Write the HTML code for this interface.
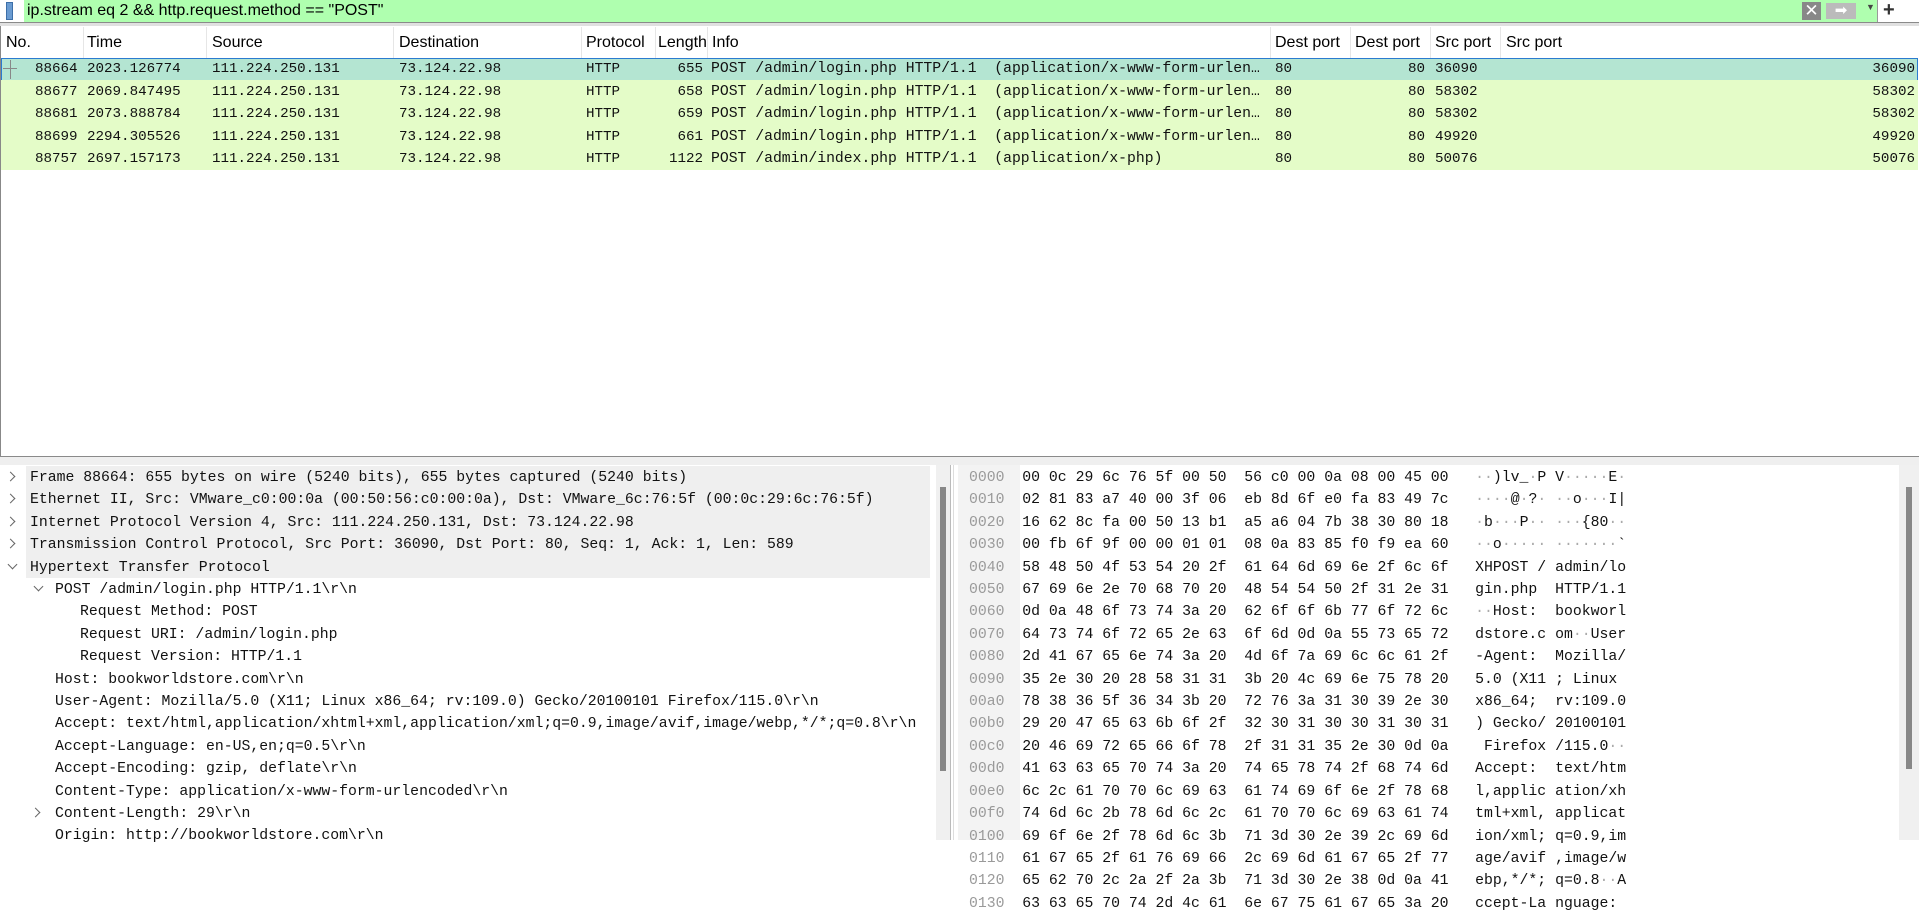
<!DOCTYPE html>
<html><head><meta charset="utf-8"><style>
*{margin:0;padding:0;box-sizing:border-box}
body{width:1919px;height:840px;overflow:hidden;background:#fff;position:relative;font-family:"Liberation Sans",sans-serif}
.a{position:absolute;white-space:pre}
.m{font-family:"Liberation Mono",monospace;font-size:14.2px;color:#111}
.h{font-size:16px;color:#000}
.row{position:absolute;left:1px;width:1917px;height:22.5px}
.d{position:absolute;left:0;height:22.4px;font-family:"Liberation Mono",monospace;font-size:14.8px;line-height:22.4px;white-space:pre;color:#111}
.x{position:absolute;left:969px;height:22.4px;font-family:"Liberation Mono",monospace;font-size:14.8px;line-height:22.4px;white-space:pre;color:#111}
.x b{font-weight:normal;color:#9a9a9a}
.x i{font-style:normal;color:#aaa}
.sep{position:absolute;top:27px;width:1px;height:31px;background:#e6e6e6}
.cv{position:absolute;width:7px;height:7px;border-right:1.3px solid #666;border-bottom:1.3px solid #666}
</style></head><body>
<div class="a" style="left:0;top:0;width:1919px;height:22px;background:#fff"></div>
<div class="a" style="left:6px;top:2px;width:7px;height:18px;background:#6a9bd1;border:1px solid #3d6fa8"></div>
<div class="a" style="left:24px;top:0;width:1854px;height:22px;background:#afffaf;border-right:1px solid #999"></div>
<div class="a" style="left:27px;top:1px;font-size:16px;line-height:20px;color:#000">ip.stream eq 2 &amp;&amp; http.request.method == "POST"</div>
<div class="a" style="left:1802px;top:2px;width:19px;height:18px;background:#888;color:#fff;font-size:17px;line-height:18px;text-align:center">✕</div>
<div class="a" style="left:1826px;top:3px;width:30px;height:16px;background:#bbb;color:#fff;font-size:15px;line-height:16px;text-align:center">➡</div>
<div class="a" style="left:1866px;top:2px;font-size:9px;color:#444">▼</div>
<div class="a" style="left:1883px;top:-1px;font-size:20px;color:#333;font-weight:bold">+</div>
<div class="a" style="left:0;top:22px;width:1919px;height:4px;background:#e0e0e0;border-top:1px solid #8a8a8a"></div>
<div class="a" style="left:0;top:26px;width:1px;height:431px;background:#888"></div>
<div class="sep" style="left:83px"></div><div class="sep" style="left:206px"></div><div class="sep" style="left:393px"></div><div class="sep" style="left:581px"></div><div class="sep" style="left:655px"></div><div class="sep" style="left:707px"></div><div class="sep" style="left:1270px"></div><div class="sep" style="left:1350px"></div><div class="sep" style="left:1430px"></div><div class="sep" style="left:1500px"></div>
<div class="a h" style="left:6px;top:34px">No.</div>
<div class="a h" style="left:87px;top:34px">Time</div>
<div class="a h" style="left:212px;top:34px">Source</div>
<div class="a h" style="left:399px;top:34px">Destination</div>
<div class="a h" style="left:586px;top:34px;width:68px;overflow:hidden">Protocol</div>
<div class="a h" style="left:658px;top:34px;width:48px;overflow:hidden">Length</div>
<div class="a h" style="left:712px;top:34px">Info</div>
<div class="a h" style="left:1275px;top:34px;width:74px;overflow:hidden">Dest port</div>
<div class="a h" style="left:1355px;top:34px;width:74px;overflow:hidden">Dest port</div>
<div class="a h" style="left:1435px;top:34px">Src port</div>
<div class="a h" style="left:1506px;top:34px">Src port</div>

<div class="row" style="top:58px;background:#b4e5d2;border:1.5px solid #2b7bd0"></div>
<div class="row" style="top:80px;background:#e4fcc8"></div>
<div class="row" style="top:102.5px;background:#e4fcc8"></div>
<div class="row" style="top:125px;background:#e4fcc8"></div>
<div class="row" style="top:147.5px;background:#e4fcc8"></div>
<div class="a" style="left:3px;top:68px;width:14px;height:1px;background:#888"></div>
<div class="a" style="left:10px;top:60px;width:1px;height:19px;background:#888"></div>

<div class="a m" style="left:35px;top:58px;line-height:22.5px">88664
88677
88681
88699
88757</div>
<div class="a m" style="left:87px;top:58px;line-height:22.5px">2023.126774
2069.847495
2073.888784
2294.305526
2697.157173</div>
<div class="a m" style="left:212px;top:58px;line-height:22.5px">111.224.250.131
111.224.250.131
111.224.250.131
111.224.250.131
111.224.250.131</div>
<div class="a m" style="left:399px;top:58px;line-height:22.5px">73.124.22.98
73.124.22.98
73.124.22.98
73.124.22.98
73.124.22.98</div>
<div class="a m" style="left:586px;top:58px;line-height:22.5px">HTTP
HTTP
HTTP
HTTP
HTTP</div>
<div class="a m" style="left:655px;width:48px;text-align:right;top:58px;line-height:22.5px">655
658
659
661
1122</div>
<div class="a m" style="left:711px;top:58px;line-height:22.5px;font-size:14.75px;width:556px;overflow:hidden">POST /admin/login.php HTTP/1.1  (application/x-www-form-urlen…
POST /admin/login.php HTTP/1.1  (application/x-www-form-urlen…
POST /admin/login.php HTTP/1.1  (application/x-www-form-urlen…
POST /admin/login.php HTTP/1.1  (application/x-www-form-urlen…
POST /admin/index.php HTTP/1.1  (application/x-php)</div>
<div class="a m" style="left:1275px;top:58px;line-height:22.5px">80
80
80
80
80</div>
<div class="a m" style="left:1350px;width:75px;text-align:right;top:58px;line-height:22.5px">80
80
80
80
80</div>
<div class="a m" style="left:1435px;top:58px;line-height:22.5px">36090
58302
58302
49920
50076</div>
<div class="a m" style="left:1800px;width:115px;text-align:right;top:58px;line-height:22.5px">36090
58302
58302
49920
50076</div>

<div class="a" style="left:0;top:456px;width:1919px;height:9px;background:#efefef;border-top:1.5px solid #8a8a8a"></div>

<div class="a" style="left:26px;top:466px;width:904px;height:112px;background:#efefef"></div>
<div class="cv" style="left:7px;top:473px;transform:rotate(-45deg)"></div>
<div class="cv" style="left:7px;top:495.4px;transform:rotate(-45deg)"></div>
<div class="cv" style="left:7px;top:517.8px;transform:rotate(-45deg)"></div>
<div class="cv" style="left:7px;top:540.2px;transform:rotate(-45deg)"></div>
<div class="cv" style="left:9px;top:561px;transform:rotate(45deg)"></div>
<div class="cv" style="left:35px;top:583.4px;transform:rotate(45deg)"></div>
<div class="cv" style="left:32px;top:809px;transform:rotate(-45deg)"></div>
<div class="d" style="left:30px;top:467px">Frame 88664: 655 bytes on wire (5240 bits), 655 bytes captured (5240 bits)</div>
<div class="d" style="left:30px;top:489.4px">Ethernet II, Src: VMware_c0:00:0a (00:50:56:c0:00:0a), Dst: VMware_6c:76:5f (00:0c:29:6c:76:5f)</div>
<div class="d" style="left:30px;top:511.8px">Internet Protocol Version 4, Src: 111.224.250.131, Dst: 73.124.22.98</div>
<div class="d" style="left:30px;top:534.2px">Transmission Control Protocol, Src Port: 36090, Dst Port: 80, Seq: 1, Ack: 1, Len: 589</div>
<div class="d" style="left:30px;top:556.6px">Hypertext Transfer Protocol</div>
<div class="d" style="left:55px;top:579px">POST /admin/login.php HTTP/1.1\r\n</div>
<div class="d" style="left:80px;top:601.4px">Request Method: POST</div>
<div class="d" style="left:80px;top:623.8px">Request URI: /admin/login.php</div>
<div class="d" style="left:80px;top:646.2px">Request Version: HTTP/1.1</div>
<div class="d" style="left:55px;top:668.6px">Host: bookworldstore.com\r\n</div>
<div class="d" style="left:55px;top:691px">User-Agent: Mozilla/5.0 (X11; Linux x86_64; rv:109.0) Gecko/20100101 Firefox/115.0\r\n</div>
<div class="d" style="left:55px;top:713.4px;width:870px;overflow:hidden">Accept: text/html,application/xhtml+xml,application/xml;q=0.9,image/avif,image/webp,*/*;q=0.8\r\n</div>
<div class="d" style="left:55px;top:735.8px">Accept-Language: en-US,en;q=0.5\r\n</div>
<div class="d" style="left:55px;top:758.2px">Accept-Encoding: gzip, deflate\r\n</div>
<div class="d" style="left:55px;top:780.6px">Content-Type: application/x-www-form-urlencoded\r\n</div>
<div class="d" style="left:55px;top:803px">Content-Length: 29\r\n</div>
<div class="d" style="left:55px;top:825.4px">Origin: http://bookworldstore.com\r\n</div>
<div class="a" style="left:936px;top:465px;width:14px;height:375px;background:#f0f0f0"></div>
<div class="a" style="left:940px;top:487px;width:6px;height:284px;background:#888"></div>
<div class="a" style="left:950px;top:465px;width:1px;height:375px;background:#bbb"></div>
<div class="a" style="left:953px;top:465px;width:1px;height:375px;background:#ddd"></div>

<div class="a" style="left:958px;top:465px;width:62px;height:375px;background:#f3f3f3"></div>
<div class="x" style="top:467px;line-height:22.4px"><b>0000</b>  00 0c 29 6c 76 5f 00 50  56 c0 00 0a 08 00 45 00   <i>··</i>)lv_<i>·</i>P V<i>·····</i>E<i>·</i>
<b>0010</b>  02 81 83 a7 40 00 3f 06  eb 8d 6f e0 fa 83 49 7c   <i>····</i>@<i>·</i>?<i>·</i> <i>··</i>o<i>···</i>I|
<b>0020</b>  16 62 8c fa 00 50 13 b1  a5 a6 04 7b 38 30 80 18   <i>·</i>b<i>···</i>P<i>··</i> <i>···</i>{80<i>··</i>
<b>0030</b>  00 fb 6f 9f 00 00 01 01  08 0a 83 85 f0 f9 ea 60   <i>··</i>o<i>·····</i> <i>·······</i>`
<b>0040</b>  58 48 50 4f 53 54 20 2f  61 64 6d 69 6e 2f 6c 6f   XHPOST / admin/lo
<b>0050</b>  67 69 6e 2e 70 68 70 20  48 54 54 50 2f 31 2e 31   gin.php  HTTP/1.1
<b>0060</b>  0d 0a 48 6f 73 74 3a 20  62 6f 6f 6b 77 6f 72 6c   <i>··</i>Host:  bookworl
<b>0070</b>  64 73 74 6f 72 65 2e 63  6f 6d 0d 0a 55 73 65 72   dstore.c om<i>··</i>User
<b>0080</b>  2d 41 67 65 6e 74 3a 20  4d 6f 7a 69 6c 6c 61 2f   -Agent:  Mozilla/
<b>0090</b>  35 2e 30 20 28 58 31 31  3b 20 4c 69 6e 75 78 20   5.0 (X11 ; Linux 
<b>00a0</b>  78 38 36 5f 36 34 3b 20  72 76 3a 31 30 39 2e 30   x86_64;  rv:109.0
<b>00b0</b>  29 20 47 65 63 6b 6f 2f  32 30 31 30 30 31 30 31   ) Gecko/ 20100101
<b>00c0</b>  20 46 69 72 65 66 6f 78  2f 31 31 35 2e 30 0d 0a    Firefox /115.0<i>··</i>
<b>00d0</b>  41 63 63 65 70 74 3a 20  74 65 78 74 2f 68 74 6d   Accept:  text/htm
<b>00e0</b>  6c 2c 61 70 70 6c 69 63  61 74 69 6f 6e 2f 78 68   l,applic ation/xh
<b>00f0</b>  74 6d 6c 2b 78 6d 6c 2c  61 70 70 6c 69 63 61 74   tml+xml, applicat
<b>0100</b>  69 6f 6e 2f 78 6d 6c 3b  71 3d 30 2e 39 2c 69 6d   ion/xml; q=0.9,im
<b>0110</b>  61 67 65 2f 61 76 69 66  2c 69 6d 61 67 65 2f 77   age/avif ,image/w
<b>0120</b>  65 62 70 2c 2a 2f 2a 3b  71 3d 30 2e 38 0d 0a 41   ebp,*/*; q=0.8<i>··</i>A
<b>0130</b>  63 63 65 70 74 2d 4c 61  6e 67 75 61 67 65 3a 20   ccept-La nguage: </div>
<div class="a" style="left:1899px;top:465px;width:20px;height:375px;background:#f0f0f0"></div>
<div class="a" style="left:1906px;top:487px;width:6px;height:282px;background:#888"></div>
</body></html>
